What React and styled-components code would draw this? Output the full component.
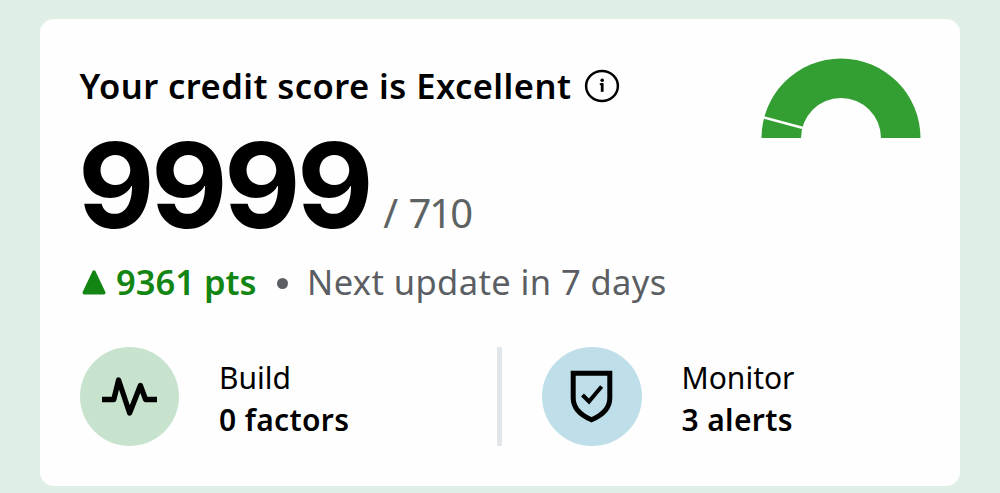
import React from 'react';
import styled, { createGlobalStyle } from 'styled-components';

const GlobalStyle = createGlobalStyle`
  * {
    box-sizing: border-box;
  }

  body {
    margin: 0;
    background-color: #e0efe5;
    font-family: 'Noto Sans', 'Open Sans', sans-serif;
    color: #000;
    overflow: hidden;
  }
`;

const Page = styled.main`
  height: 493px;
  padding: 18.5px 40px 7px;
`;

const Card = styled.section`
  height: 467.5px;
  padding: 39.5px 39.5px 40px;
  background-color: #fefefe;
  border-radius: 14px;
`;

const Header = styled.div`
  display: flex;
  justify-content: space-between;
  align-items: flex-start;
`;

const Title = styled.h1`
  display: flex;
  align-items: center;
  gap: 13px;
  margin: 0;
  height: 55px;
  font-size: 34.5px;
  font-weight: 600;
  line-height: 54px;
  letter-spacing: 0.45px;
  white-space: nowrap;
`;

const Score = styled.div`
  display: flex;
  align-items: baseline;
  height: 140px;
  line-height: 145px;
  white-space: nowrap;
`;

const ScoreValue = styled.span`
  margin-left: -1.5px;
  font-family: Inter, 'Noto Sans', sans-serif;
  font-size: 118px;
  font-weight: 700;
  letter-spacing: -3.6px;
`;

const ScoreTotal = styled.span`
  margin-left: 13px;
  font-size: 40px;
  letter-spacing: -2px;
  word-spacing: 4px;
  color: #5d6362;
`;

const Gauge = styled.svg`
  display: block;
  flex: none;
  width: 160px;
  height: 80px;
`;

const Status = styled.div`
  display: flex;
  align-items: center;
  height: 57px;
  font-size: 34.5px;
  line-height: 57px;
  color: #5b5e63;
  white-space: nowrap;
`;

const Change = styled.span`
  margin-left: 10.5px;
  font-weight: 600;
  color: #128512;
`;

const Dot = styled.span`
  width: 11px;
  height: 11px;
  margin: 4px 19.5px 0 20px;
  border-radius: 50%;
  background-color: #5b5e63;
`;

const NextUpdate = styled.span`
  letter-spacing: 0.4px;
`;

const Actions = styled.div`
  display: flex;
  margin-top: 37px;
`;

const Action = styled.div`
  display: flex;
  align-items: center;
  gap: 40px;
  width: ${({ $width }) => $width}px;
`;

const IconCircle = styled.div`
  display: flex;
  flex: none;
  width: 99.5px;
  height: 99px;
  border-radius: 50%;
  background-color: ${({ $color }) => $color};
`;

const Divider = styled.div`
  width: 5px;
  height: 99px;
  margin-right: 40px;
  background-color: #e1e6ea;
`;

const ActionText = styled.div`
  padding-top: 5px;
  font-size: 30px;
  line-height: 42px;
  white-space: nowrap;
`;

const ActionLabel = styled.div`
  letter-spacing: 0;
`;

const ActionValue = styled.div`
  font-weight: 600;
  letter-spacing: 0.35px;
`;

const InfoIcon = () => (
  <svg width="36" height="36" viewBox="0 0 36 36" fill="none">
    <ellipse cx="18" cy="18" rx="15.9" ry="15.1" stroke="#000" strokeWidth="2.5" />
    <circle cx="18.2" cy="12.2" r="1.8" fill="#000" />
    <path d="M18.2 15.2v8.6" stroke="#000" strokeWidth="2.8" />
    <path d="M15.8 16.2h3" stroke="#000" strokeWidth="2" />
  </svg>
);

const ScoreGauge = () => (
  <Gauge viewBox="0 0 160 80">
    <path d="M.5 80A79.5 79.5 0 0 1 159.5 80H120A40 40 0 0 0 40 80Z" fill="#339f33" />
    <path d="M1 59L43 70.2" stroke="#fefefe" strokeWidth="2.6" />
  </Gauge>
);

const PulseIcon = () => (
  <svg width="99" height="99" viewBox="0 0 99 99" fill="none">
    <path
      d="M22 52.5H33.8L38.6 33L49.6 66L60.4 38.5L65.6 52.5H77"
      stroke="#000"
      strokeWidth="5.3"
      strokeLinejoin="round"
    />
  </svg>
);

const ShieldIcon = () => (
  <svg width="99" height="99" viewBox="0 0 99 99" fill="none" stroke="#000">
    <path d="M31.2 26.3H67.8V51C67.8 61 60 68.3 49.5 72.8C39 68.3 31.2 61 31.2 51Z" strokeWidth="5" />
    <path d="M40.5 48L47 54.5L59.6 39.5" strokeWidth="4" />
  </svg>
);

const App = () => {
  return (
    <>
      <GlobalStyle />
      <Page>
        <Card>
          <Header>
            <div>
              <Title>
                Your credit score is Excellent
                <InfoIcon />
              </Title>
              <Score>
                <ScoreValue>9999</ScoreValue>
                <ScoreTotal>/ 710</ScoreTotal>
              </Score>
            </div>
            <ScoreGauge />
          </Header>

          <Status>
            <svg width="26" height="28" viewBox="0 0 26 28">
              <path d="M14 4L23.8 24.8H4.2Z" fill="#128512" stroke="#128512" strokeWidth="3.4" strokeLinejoin="round" />
            </svg>
            <Change>9361 pts</Change>
            <Dot />
            <NextUpdate>Next update in 7 days</NextUpdate>
          </Status>

          <Actions>
            <Action $width={417.5}>
              <IconCircle $color="#c8e3cd">
                <PulseIcon />
              </IconCircle>
              <ActionText>
                <ActionLabel>Build</ActionLabel>
                <ActionValue>0 factors</ActionValue>
              </ActionText>
            </Action>
            <Divider />
            <Action $width={377}>
              <IconCircle $color="#bedfe9">
                <ShieldIcon />
              </IconCircle>
              <ActionText>
                <ActionLabel>Monitor</ActionLabel>
                <ActionValue>3 alerts</ActionValue>
              </ActionText>
            </Action>
          </Actions>
        </Card>
      </Page>
    </>
  );
};

export default App;
